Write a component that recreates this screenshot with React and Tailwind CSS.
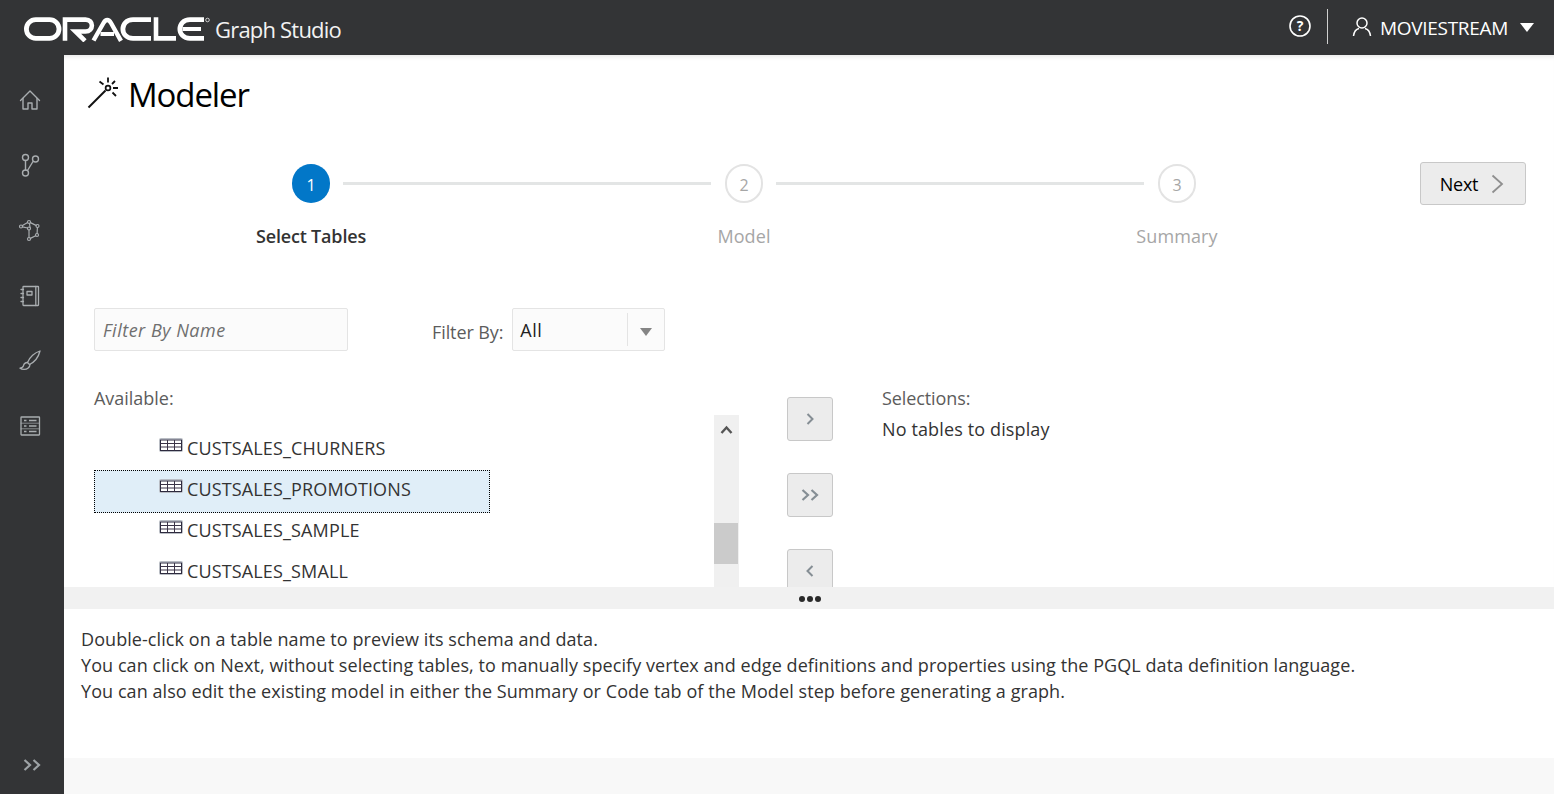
import React from "react";

const FONT = "font-['Open_Sans','Noto_Sans',sans-serif]";

function OracleLogo() {
  return (
    <svg width="188" height="26" viewBox="0 0 188 26" className="block" fill="none" stroke="#fff" role="img" aria-label="Oracle">
      {/* O */}
      <rect x="3.4" y="3.6" width="32.6" height="18.8" rx="9.4" strokeWidth="4.8" />
      {/* R */}
      <path d="M42 24.8V3.600H62.500C71 3.600 71 15.500 62.500 15.500H52.500L62 24.800" strokeWidth="4.600" />
      {/* A */}
      <path d="M70.500 24.500L80.500 7C82.800 3 85.700 3 88 7L98 24.800" strokeWidth="4.400" />
      <path d="M77.500 18H91" strokeWidth="4" />
      {/* C */}
      <path d="M128 3.600H110C96.500 3.600 96.500 22.400 110 22.400H128" strokeWidth="4.800" />
      {/* L */}
      <path d="M133 1.200V22.400H153" strokeWidth="4.600" />
      {/* E */}
      <path d="M181 3.600H167C153.500 3.600 153.500 22.400 167 22.400H181" strokeWidth="4.800" />
      <path d="M159.500 13H178" strokeWidth="4" />
      {/* registered mark */}
      <circle cx="184.500" cy="4" r="1.800" strokeWidth="0.900" stroke="#ddd" />
    </svg>
  );
}

const Ico = ({ children, w = 24, h = 24, vb = "0 0 24 24", sw = 1.4, color = "#a9adb0", className = "" }) => (
  <svg width={w} height={h} viewBox={vb} fill="none" stroke={color} strokeWidth={sw} strokeLinecap="round" strokeLinejoin="round" className={className}>
    {children}
  </svg>
);

const HomeIcon = () => (
  <Ico>
    <path d="M2.500 12.500 12 3l9.500 9.500" />
    <path d="M5 10.500V21h5v-6h4v6h5V10.500" />
  </Ico>
);
const GraphIcon = () => (
  <Ico>
    <circle cx="7.500" cy="4.500" r="3" />
    <circle cx="7.500" cy="20" r="3" />
    <circle cx="17.500" cy="6" r="3" />
    <path d="M7.500 7.500V17M9.500 17.500 15 8.500" />
  </Ico>
);
const ModelIcon = () => (
  <Ico sw={1.2}>
    <circle cx="3" cy="8.500" r="1.500" />
    <circle cx="11" cy="4" r="1.500" />
    <circle cx="19.500" cy="8" r="1.500" />
    <circle cx="19" cy="17" r="1.500" />
    <circle cx="11" cy="21" r="1.500" />
    <circle cx="11" cy="10.500" r="1.500" />
    <path d="M4.500 7.600 9.600 4.600M12.400 4.600 18 7.400M19.400 9.500 19.100 15.500M17.700 17.700 12.400 20.400M11 19.500V12M9.600 10 4.400 8.900M12 9.300 11.500 5.500" />
  </Ico>
);
const NotebookIcon = () => (
  <Ico sw={1.3}>
    <rect x="5" y="2.500" width="15.500" height="19" rx="0.500" />
    <path d="M17.800 2.500v19" />
    <rect x="9" y="7.500" width="5" height="3.500" />
    <path d="M3 5.500h2.500M3 9.500h2.500M3 13.500h2.500M3 17.500h2.500" />
  </Ico>
);
const BrushIcon = () => (
  <Ico sw={1.3}>
    <path d="M22 2C17 3.500 11.500 8 9.500 13.500l2 2C16.500 13 20.500 8 22 2Z" />
    <path d="M9.500 13.500c-2.800 0-3.700 1.800-4 3.200-.3 1.500-1.500 2.300-3.500 2.500 2 1.600 6 1.800 8.200-.2 1.300-1.200 1.800-2.600 1.800-3.500" />
  </Ico>
);
const ListIcon = () => (
  <Ico sw={1.3}>
    <rect x="3" y="3" width="18.500" height="18" rx="0.500" />
    <path d="M6 6.500h2.500M11 6.500h7.500M6 12h2.500M11 12h7.500M6 17.500h2.500M11 17.500h7.500" strokeWidth="1.600" strokeLinecap="butt" />
    <path d="M3 9.200h18.500M3 14.800h18.500" strokeWidth="0.700" />
  </Ico>
);
const DoubleChevron = ({ color = "#9ea3a6", className = "" }) => (
  <svg width="18" height="12" viewBox="0 0 18 12" fill="none" stroke={color} strokeWidth="2.200" className={className}>
    <path d="M1.500 1 7 6l-5.500 5M10.500 1 16 6l-5.500 5" />
  </svg>
);
const Wand = () => (
  <svg width="34" height="36" viewBox="0 0 34 36" fill="none" stroke="#111" strokeWidth="1.800" strokeLinecap="butt" className="shrink-0 -mt-px">
    <path d="M2.500 33.500 19.500 16.500" strokeWidth="2" />
    <circle cx="22" cy="14" r="2.400" strokeWidth="1.700" />
    <path d="M22 3.500V8.500M27 14H32M13.500 7.500 17.500 10.500M26 10 29 7M26.500 18.500 30 22" />
  </svg>
);
const TableIcon = () => (
  <svg width="24" height="14" viewBox="0 0 24 14" fill="none" className="shrink-0">
    <rect x="0.500" y="0.500" width="23" height="13" rx="1" fill="#dfe3ea" stroke="#b9bdc4" />
    <rect x="1.500" y="2" width="21" height="10.500" fill="#fff" stroke="#2d2a3e" />
    <path d="M1.500 5.500h21M1.500 9h21M8.500 2v10.500M15.500 2v10.500" stroke="#3a3346" />
  </svg>
);

const SIDE = [HomeIcon, GraphIcon, ModelIcon, NotebookIcon, BrushIcon, ListIcon];

function Step({ n, label, active }) {
  return (
    <div className="w-[200px] flex flex-col items-center shrink-0">
      <div
        className={
          active
            ? "w-[38px] h-[39px] pt-[2px] rounded-full bg-[#0277c8] text-white flex items-center justify-center text-[16px]"
            : "w-[38px] h-[39px] pt-[2px] rounded-full border-2 border-[#e3e3e3] bg-white text-[#a6a6a6] flex items-center justify-center text-[16px]"
        }
      >
        {n}
      </div>
      <div className={active ? "mt-[21px] text-[18px] leading-[24px] font-semibold tracking-[-0.18px] text-[#333]" : "mt-[21px] text-[18px] leading-[24px] tracking-[0.1px] text-[#a6a6a6]"}>
        {label}
      </div>
    </div>
  );
}

function Row({ name, selected }) {
  return (
    <div
      className={
        selected
          ? "h-[43px] w-[396px] bg-[#e0eef8] border border-dotted border-black pl-[64px] pb-[5px] flex items-center shrink-0 mt-px -mb-[3px]"
          : "h-[41px] w-[396px] pl-[65px] flex items-center shrink-0"
      }
    >
      <div className="-mt-[7px]"><TableIcon /></div>
      <span className="ml-[4px] text-[18px] tracking-[0.14px] text-[#333]">{name}</span>
    </div>
  );
}

function MoveButton({ children, className = "" }) {
  return (
    <div className={"w-[46px] h-[44px] shrink-0 rounded-[3px] border border-[#c8c8c8] bg-[#ececec] flex items-center justify-center " + className}>
      {children}
    </div>
  );
}

export default function App() {
  return (
    <div className={"w-[1554px] h-[794px] overflow-hidden flex flex-col bg-white " + FONT}>
      <header className="h-[55px] shrink-0 bg-[#333436] flex items-center text-white relative z-10">
        <div className="ml-[23px] mt-[2px]"><OracleLogo /></div>
        <span className="ml-[4px] mt-[4px] text-[22px] tracking-[-0.8px] text-[#f2f2f2]">Graph Studio</span>
        <div className="ml-auto flex items-center">
          <svg width="24" height="24" viewBox="0 0 24 24" fill="none" className="mt-[-4px]">
            <circle cx="12" cy="12" r="10" stroke="#fff" strokeWidth="1.600" />
            <text x="12" y="17" textAnchor="middle" fontSize="14" fontWeight="700" fill="#fff" fontFamily="Open Sans">?</text>
          </svg>
          <div className="w-px h-[35px] bg-[#d0d0d0] ml-[15px] mr-[24px] mt-[-2px]" />
          <svg width="20" height="22" viewBox="0 0 20 22" fill="none" stroke="#fff" strokeWidth="1.500" className="mt-[-2px]">
            <circle cx="10" cy="7" r="5" />
            <path d="M1.500 20c.5-4 3-7 5.500-7.500M18.500 20c-.5-4-3-7-5.500-7.500" />
          </svg>
          <span className="ml-[8px] mt-[2px] text-[19px] tracking-[-0.3px] text-white">MOVIESTREAM</span>
          <div className="ml-[12px] mr-[20px] mt-0 w-0 h-0 border-l-[7px] border-r-[7px] border-t-[9px] border-l-transparent border-r-transparent border-t-white" />
        </div>
      </header>

      <div className="flex-1 flex min-h-0">
        <aside className="w-[64px] shrink-0 bg-[#333436] flex flex-col items-center pt-[33px] pb-[23px] pr-[4px]">
          <div className="flex flex-col gap-[41.200px]">
            {SIDE.map((I, i) => (
              <div key={i} className="w-[24px] h-[24px]"><I /></div>
            ))}
          </div>
          <div className="mt-auto ml-[4px]"><DoubleChevron /></div>
        </aside>

        <main className="flex-1 flex flex-col min-w-0">
          <div className="h-[532px] shrink-0 overflow-hidden relative shadow-[inset_0_5px_5px_-4px_rgba(0,0,0,0.12)]">
            <div className="pl-[22px] pt-[20px] flex items-start">
              <Wand />
              <h1 className="ml-[8px] text-[33px] leading-[40px] tracking-[-1.1px] text-black">Modeler</h1>
            </div>

            <div className="mt-[49px] ml-[147px] flex items-start">
              <Step n="1" label="Select Tables" active />
              <div className="-ml-[68px] w-[368px] h-[3px] bg-[#e3e5e5] mt-[18px]" />
              <div className="-ml-[67px]"><Step n="2" label="Model" /></div>
              <div className="-ml-[68px] w-[368px] h-[3px] bg-[#e3e5e5] mt-[18px]" />
              <div className="-ml-[67px]"><Step n="3" label="Summary" /></div>
              <button className="ml-[143px] -mt-[2px] pt-px pr-[2px] w-[106px] h-[43px] rounded-[3px] border border-[#c8c8c8] bg-[#ececec] flex items-center justify-center gap-[13px] text-[18px] tracking-[-0.3px] text-black">
                Next
                <svg width="13" height="20" viewBox="0 0 13 20" fill="none" stroke="#8f8f8f" strokeWidth="1.800"><path d="M1.500 1.500 11 10l-9.500 8.500" /></svg>
              </button>
            </div>

            <div className="mt-[60px] ml-[30px] flex items-start">
              <div className="w-[254px] h-[43px] pt-[2px] rounded-[2px] border border-[#e4e4e4] bg-[#fbfbfb] flex items-center pl-[8px] text-[18px] italic tracking-[0.5px] text-[#6f6f6f]">
                Filter By Name
              </div>
              <span className="ml-[84px] mt-[12px] text-[18px] leading-[24px] tracking-[-0.1px] text-[#5c5c5c]">Filter By:</span>
              <div className="ml-[9px] w-[153px] h-[43px] rounded-[2px] border border-[#e4e4e4] bg-[#fbfbfb] flex items-center text-[18px] text-[#222]">
                <span className="pl-[7px] pt-[2px] flex-1 tracking-[0.5px]">All</span>
                <div className="w-px h-[33px] bg-[#e4e4e4]" />
                <div className="mx-[12px] mt-[5px] w-0 h-0 border-l-[6px] border-r-[6px] border-t-[8px] border-l-transparent border-r-transparent border-t-[#858585]" />
              </div>
            </div>

            <div className="ml-[30px] mt-[34px] flex items-start">
              <div className="w-[645px] shrink-0 flex flex-col">
                <div className="text-[18px] leading-[26px] tracking-[-0.02px] text-[#5c5c5c]">Available:</div>
                <div className="flex mt-[4px]">
                  <div className="w-[620px] pt-[13px] flex flex-col">
                    <Row name="CUSTSALES_CHURNERS" />
                    <Row name="CUSTSALES_PROMOTIONS" selected />
                    <Row name="CUSTSALES_SAMPLE" />
                    <Row name="CUSTSALES_SMALL" />
                  </div>
                  <div className="w-[25px] h-[180px] bg-[#f0f0f0] shrink-0 flex flex-col">
                    <svg width="24" height="30" viewBox="0 0 24 30" fill="none" stroke="#555" strokeWidth="2.400" className="shrink-0">
                      <path d="M7.500 18 12.500 12.500 17.500 18" />
                    </svg>
                    <div className="mt-[78px] w-[24px] h-[41px] bg-[#cbcbcb]" />
                  </div>
                </div>
              </div>

              <div className="ml-[48px] mt-[12px] flex flex-col gap-[32px] shrink-0">
                <MoveButton>
                  <svg width="8" height="12" viewBox="0 0 8 12" fill="none" stroke="#858e94" strokeWidth="2"><path d="M1.500 1 6.500 6l-5 5" /></svg>
                </MoveButton>
                <MoveButton><DoubleChevron color="#858e94" /></MoveButton>
                <MoveButton>
                  <svg width="8" height="12" viewBox="0 0 8 12" fill="none" stroke="#858e94" strokeWidth="2"><path d="M6.500 1 1.500 6l5 5" /></svg>
                </MoveButton>
              </div>

              <div className="ml-[49px] flex flex-col text-[18px]">
                <div className="leading-[26px] tracking-[-0.1px] text-[#5c5c5c]">Selections:</div>
                <div className="mt-[5px] leading-[26px] tracking-[0.13px] text-[#333]">No tables to display</div>
              </div>
            </div>
          </div>

          <div className="h-[22px] shrink-0 bg-[#f1f1f1] flex items-center justify-center gap-[2px] pt-[1px] pl-[2px]">
            <span className="w-[6px] h-[6px] rounded-full bg-[#2a2a2a]" />
            <span className="w-[6px] h-[6px] rounded-full bg-[#2a2a2a]" />
            <span className="w-[6px] h-[6px] rounded-full bg-[#2a2a2a]" />
          </div>

          <div className="h-[149px] shrink-0 bg-white pl-[17px] pt-[17px] text-[18px] leading-[26px] tracking-[0.07px] text-[#333]">
            <p>Double-click on a table name to preview its schema and data.</p>
            <p>You can click on Next, without selecting tables, to manually specify vertex and edge definitions and properties using the PGQL data definition language.</p>
            <p>You can also edit the existing model in either the Summary or Code tab of the Model step before generating a graph.</p>
          </div>

          <div className="flex-1 bg-[#f8f8f8]" />
        </main>
      </div>
    </div>
  );
}
